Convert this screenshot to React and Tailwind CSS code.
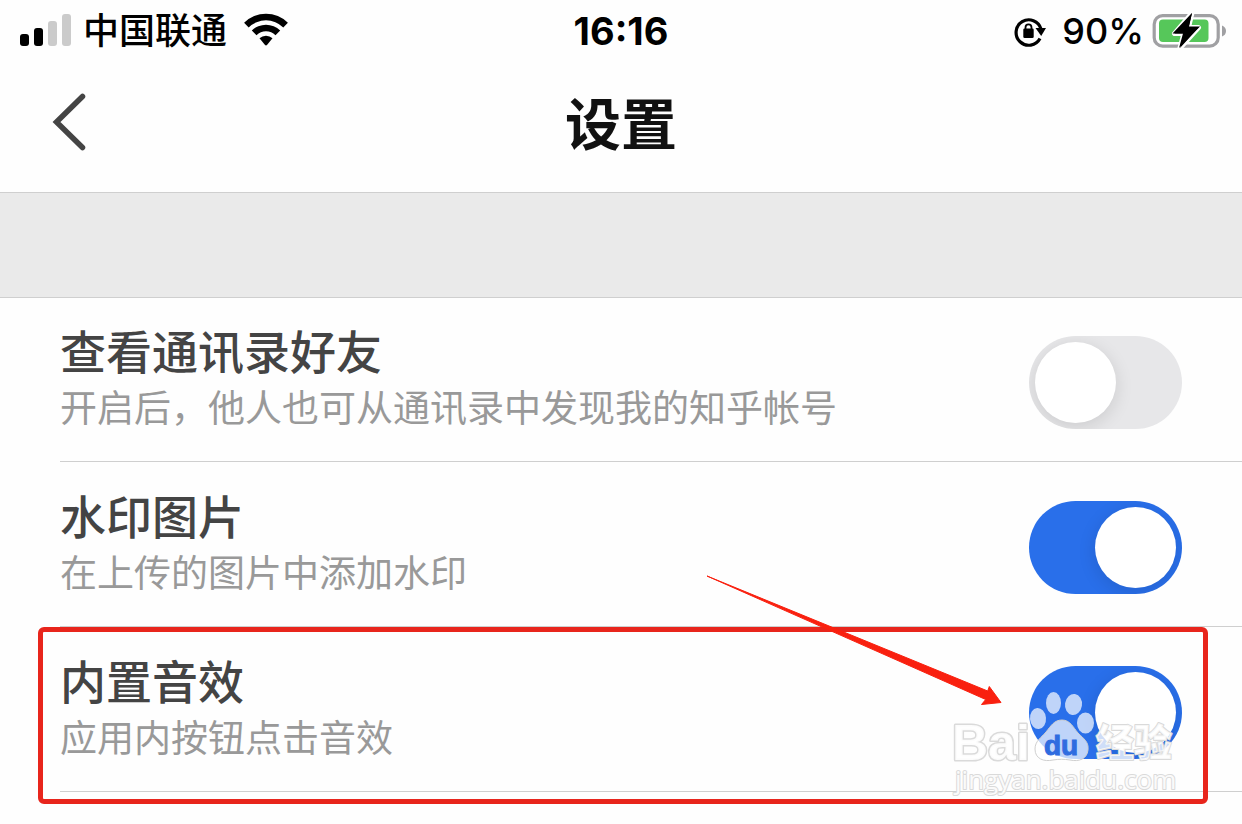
const fonts = "font-['Inter','Noto_Sans_CJK_SC',sans-serif]";

function StatusBar() {
  return (
    <header className="grid grid-cols-[1fr_auto_1fr] items-center h-[62px] px-4 text-black">
      <div className="flex items-center pl-1">
        <svg className="w-[51px] h-[34px] shrink-0" viewBox="0 0 51 34" role="img" aria-label="信号">
          <rect x="0" y="20" width="9" height="12" rx="3" />
          <rect x="14" y="14" width="9" height="18" rx="3" />
          <rect x="28" y="7" width="9" height="25" rx="3" fill="#cbcbcb" />
          <rect x="42" y="0" width="9" height="32" rx="3" fill="#cbcbcb" />
        </svg>
        <span className="ml-3 text-[36px] leading-[60px] font-medium">中国联通</span>
        <svg className="ml-4 w-[46px] h-9 shrink-0" viewBox="0 0 45 36" role="img" aria-label="Wi-Fi">
          <path d="M0.600 9.800 A31 31 0 0 1 44.400 9.800 L39.800 14.400 A24.800 24.800 0 0 0 5.200 14.400 Z" />
          <path d="M8.300 17.500 A20.200 20.200 0 0 1 36.700 17.500 L32 22.200 A13.500 13.500 0 0 0 13 22.200 Z" />
          <path d="M16 25.300 A9.400 9.400 0 0 1 29 25.300 L23.700 31.800 Q22.500 33 21.300 31.800 Z" />
        </svg>
      </div>
      <time className="text-[38px] font-bold leading-[60px]">16:16</time>
      <div className="flex items-center justify-end">
        <svg className="w-8 h-8 shrink-0" viewBox="0 0 32 32" role="img" aria-label="方向锁定">
          <path d="M26 23.500 A12.700 12.700 0 1 1 27 14" fill="none" stroke="#000" strokeWidth="3.200" />
          <path d="M21.500 13 H32 L27.200 21 Z" />
          <rect x="9.300" y="13.500" width="10.400" height="9.500" rx="1.300" />
          <path d="M11.500 14 V12.500 A3 3.200 0 0 1 17.500 12.500 V14" fill="none" stroke="#000" strokeWidth="1.800" />
        </svg>
        <span className="ml-4 text-[36px] leading-[60px] font-medium">90%</span>
        <svg className="ml-2 w-[74px] h-[38px] shrink-0" viewBox="0 0 74 38" role="img" aria-label="正在充电">
          <rect x="2.200" y="3.700" width="64" height="30.500" rx="8.500" fill="#fff" stroke="#a0a0a3" strokeWidth="3.200" />
          <rect x="7" y="7.500" width="49.500" height="22.500" rx="4" fill="#56c75a" />
          <path d="M70 13.500 Q74 15 74 19 Q74 23 70 24.500 Z" fill="#a0a0a3" />
          <path d="M40 1 L22.500 21.500 H32 L28 36 L46.500 15.500 H36.500 Z" fill="#000" stroke="#fff" strokeWidth="5" strokeLinejoin="round" paintOrder="stroke" />
          <path d="M40 1 L20.500 21.500 H31 L27 36 L48 14.500 H37 Z" fill="#000" />
        </svg>
      </div>
    </header>
  );
}

function TitleBar() {
  return (
    <nav className="grid grid-cols-[1fr_auto_1fr] items-center h-[131px] pb-1 px-[50px] border-b border-[#cfcfcf]">
      <button type="button" aria-label="返回" className="w-10 h-20 pb-1 flex items-center">
        <svg className="w-10 h-16" viewBox="0 0 40 64" fill="none" stroke="#444" strokeWidth="5.500" strokeLinecap="round" strokeLinejoin="miter">
          <path d="M32.500 5.500 L6.500 31 L32.500 56.500" />
        </svg>
      </button>
      <h1 className="text-[56px] leading-[80px] font-bold text-[#111]">设置</h1>
    </nav>
  );
}

function Switch({ id, defaultChecked }) {
  return (
    <input
      id={id}
      type="checkbox"
      role="switch"
      defaultChecked={defaultChecked}
      className="appearance-none flex items-center shrink-0 w-[153px] h-[93px] p-[6px] rounded-full overflow-hidden cursor-pointer bg-[#e7e7e9] checked:bg-[#296fea] checked:justify-end before:content-[''] before:block before:size-[81px] before:rounded-full before:bg-white before:shadow-[0_4px_18px_rgba(0,0,0,0.12)]"
    />
  );
}

function SettingRow({ id, title, description, on, children }) {
  return (
    <li className="relative pl-[60px]">
      <div className="flex items-center justify-between h-[165px] pt-1.5 pr-[60px] border-b border-[#cfcfcf]">
        <label htmlFor={id} className="flex flex-col pb-1.5">
          <span className="text-[46px] leading-[60px] font-medium text-[#444]">{title}</span>
          <span className="text-[37px] leading-[54px] text-[#999]">{description}</span>
        </label>
        <Switch id={id} defaultChecked={on} />
      </div>
      {children}
    </li>
  );
}

function Highlight() {
  return (
    <>
      <div className="absolute left-[38px] right-[34px] top-0 -bottom-3 rounded-md border-[5px] border-[#e8251c] pointer-events-none" />
      <svg className="absolute right-[240px] -top-[52px] w-[296px] h-[132px] pointer-events-none" viewBox="0 0 296 132" aria-hidden="true">
        <path d="M1 1 L281.700 116 L283.300 111.500 L295 127.500 L275.500 129.500 L279.700 124.500 Z" fill="#f9200f" stroke="#f9200f" strokeWidth="1" />
      </svg>
    </>
  );
}

function Watermark() {
  return (
    <svg
      className="absolute right-[62px] top-[58px] w-[232px] h-[116px] pointer-events-none"
      viewBox="0 0 232 116"
      aria-hidden="true"
    >
      <g fill="#fff" fillOpacity="0.700" stroke="#cfcfcf" strokeWidth="1">
        <ellipse cx="90" cy="33.500" rx="8" ry="10.500" transform="rotate(-5 90 33.500)" stroke="none" />
        <ellipse cx="105.500" cy="18" rx="7.500" ry="11" stroke="none" />
        <ellipse cx="125.500" cy="19.500" rx="8.500" ry="10.500" transform="rotate(8 125.500 19.500)" stroke="none" />
        <ellipse cx="137.500" cy="38" rx="8.500" ry="10.500" stroke="none" />
        <path d="M114 35 C122 35 125 42 130 48 C136 54 141 57 140 65 C139 74 131 77 122 75 C116 74 111 74 105 75 C96 77 87 74 87 64 C87 56 93 53 98 47 C103 41 106 35 114 35 Z" />
      </g>
      <g fill="#fff" fillOpacity="0.900" stroke="#dadada" strokeWidth="3" strokeLinejoin="round" paintOrder="stroke">
        <text x="4" y="75" fontSize="50" className="font-['Liberation_Sans',sans-serif] font-bold">Bai</text>
        <text x="148" y="71" fontSize="38" strokeWidth="2" fillOpacity="0.800" className="font-['Noto_Sans_CJK_SC',sans-serif] font-black">经验</text>
        <text x="7" y="104" fontSize="26" strokeWidth="2" className="font-['Open_Sans',sans-serif]">jingyan.baidu.com</text>
      </g>
      <text x="96" y="70" fontSize="28" fill="#2f6ce0" stroke="#2f6ce0" strokeWidth="1" className="font-['Liberation_Sans',sans-serif] font-bold">du</text>
    </svg>
  );
}

export default function App() {
  return (
    <div className={`min-h-screen bg-[#fefefe] overflow-x-hidden ${fonts}`} lang="zh-CN">
      <StatusBar />
      <TitleBar />
      <main>
        <div className="h-[105px] bg-[#eaeaea] border-b border-[#cfcfcf]" />
        <ul className="-mt-px pb-8">
          <SettingRow id="contacts" title="查看通讯录好友" description="开启后，他人也可从通讯录中发现我的知乎帐号" />
          <SettingRow id="image-mark" title="水印图片" description="在上传的图片中添加水印" on />
          <SettingRow id="sound" title="内置音效" description="应用内按钮点击音效" on>
            <Highlight />
            <Watermark />
          </SettingRow>
        </ul>
      </main>
    </div>
  );
}
